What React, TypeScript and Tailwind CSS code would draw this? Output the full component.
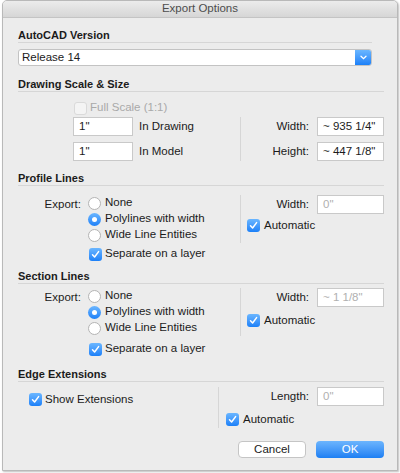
import React from "react";

const font = { fontFamily: '"Liberation Sans", Arial, sans-serif' };

const Check = ({ checked = false, disabled = false }: { checked?: boolean; disabled?: boolean }) => {
  if (checked) {
    return (
      <span className="flex h-[13px] w-[13px] shrink-0 items-center justify-center rounded-[3px] bg-gradient-to-b from-[#6ab6ff] to-[#1a80f8]">
        <svg width="9" height="9" viewBox="0 0 9 9">
          <path d="M1.5 4.8 L3.6 7 L7.6 1.6" fill="none" stroke="white" strokeWidth="1.5" strokeLinecap="round" strokeLinejoin="round" />
        </svg>
      </span>
    );
  }
  return (
    <span
      className={
        disabled
          ? "h-[13px] w-[13px] shrink-0 rounded-[3px] border border-[#dadada] bg-[#f4f4f4]"
          : "h-[13px] w-[13px] shrink-0 rounded-[3px] border border-[#b4b4b4] bg-white"
      }
    />
  );
};

const Radio = ({ checked = false }: { checked?: boolean }) =>
  checked ? (
    <span className="flex h-[13px] w-[13px] shrink-0 items-center justify-center rounded-full bg-gradient-to-b from-[#6ab6ff] to-[#1a80f8]">
      <span className="h-[5px] w-[5px] rounded-full bg-white" />
    </span>
  ) : (
    <span className="h-[13px] w-[13px] shrink-0 rounded-full border border-[#b4b4b4] bg-white" />
  );

const Heading = ({ children, mt }: { children: React.ReactNode; mt: string }) => (
  <>
    <div className={`${mt} h-[14px] text-[11px] font-bold leading-[14px] text-[#1b1b1b]`}>{children}</div>
    <div className="h-px bg-[#d6d6d6]" />
  </>
);

const Field = ({ value, muted = false, w = "w-[67px]" }: { value: string; muted?: boolean; w?: string }) => (
  <div
    className={`${w} h-[19px] border border-[#c9c9c9] bg-white pl-[5px] text-[11.5px] leading-[17px] ${
      muted ? "text-[#b0b0b0]" : "text-[#1b1b1b]"
    }`}
  >
    {value}
  </div>
);

const LineBlock = ({ width, automaticTop }: { width: string; automaticTop: string }) => (
  <div className="flex">
    <div className="flex w-[222px]">
      <div className="w-[63px] pt-[1px] text-right leading-[16px]">Export:</div>
      <div className="ml-[7px] flex flex-col">
        <div className="flex h-[16px] items-center gap-[4px]">
          <Radio />
          <span>None</span>
        </div>
        <div className="flex h-[16px] items-center gap-[4px]">
          <Radio checked />
          <span>Polylines with width</span>
        </div>
        <div className="flex h-[16px] items-center gap-[4px]">
          <Radio />
          <span>Wide Line Entities</span>
        </div>
      </div>
    </div>
    <div className="w-px bg-[#d6d6d6]" />
    <div className="flex flex-1 flex-col">
      <div className="flex items-center justify-end gap-[8px]">
        <span>Width:</span>
        <Field value={width} muted />
      </div>
      <div className={`${automaticTop} ml-[6px] flex items-center gap-[4px]`}>
        <Check checked />
        <span>Automatic</span>
      </div>
    </div>
  </div>
);

export default function App() {
  return (
    <div className="h-[473px] w-[400px] bg-white text-[11.5px] text-[#1b1b1b]" style={font}>
      <div className="ml-[2px] flex h-[471px] w-[396px] flex-col overflow-hidden rounded-t-[5px] border border-[#b9b9b9] bg-[#ececec] shadow-[1px_1px_2px_rgba(0,0,0,0.25)]">
        <div className="flex h-[17px] shrink-0 items-center justify-center border-b border-[#c4c4c4] bg-gradient-to-b from-[#ececec] to-[#d6d6d6] text-[11.5px] text-[#4d4d4d]">
          Export Options
        </div>
        <div className="flex flex-col pl-[15px] pr-[13px]">
          <div className="w-[354px]">
            <Heading mt="mt-[10px]">AutoCAD Version</Heading>
          </div>
          <div className="mt-[6px] flex h-[17px] w-[354px] overflow-hidden rounded-[3px] border border-[#c3c3c3] bg-white">
            <div className="flex-1 pl-[3px] leading-[15px]">Release 14</div>
            <div className="flex w-[16px] items-center justify-center bg-gradient-to-b from-[#6ab6ff] to-[#1a80f8]">
              <svg width="7" height="5" viewBox="0 0 7 5">
                <path d="M1 1.2 L3.5 3.6 L6 1.2" fill="none" stroke="white" strokeWidth="1.3" strokeLinecap="round" />
              </svg>
            </div>
          </div>

          <Heading mt="mt-[11px]">Drawing Scale &amp; Size</Heading>
          <div className="mt-[9px] ml-[56px] flex h-[14px] items-center gap-[3px] text-[#a9a9a9]">
            <Check disabled />
            <span>Full Scale (1:1)</span>
          </div>
          <div className="mt-[2px] flex">
            <div className="flex w-[222px] flex-col gap-[6px] pl-[55px]">
              <div className="flex items-center gap-[6px]">
                <Field value={'1"'} w="w-[60px]" />
                <span>In Drawing</span>
              </div>
              <div className="flex items-center gap-[6px]">
                <Field value={'1"'} w="w-[60px]" />
                <span>In Model</span>
              </div>
            </div>
            <div className="w-px bg-[#d6d6d6]" />
            <div className="flex flex-1 flex-col gap-[6px]">
              <div className="flex items-center justify-end gap-[8px]">
                <span>Width:</span>
                <Field value={'~ 935 1/4"'} />
              </div>
              <div className="flex items-center justify-end gap-[8px]">
                <span>Height:</span>
                <Field value={'~ 447 1/8"'} />
              </div>
            </div>
          </div>

          <Heading mt="mt-[10px]">Profile Lines</Heading>
          <div className="mt-[9px]">
            <LineBlock width={'0"'} automaticTop="mt-[3px]" />
          </div>
          <div className="mt-[3px] ml-[71px] flex h-[16px] items-center gap-[3px]">
            <Check checked />
            <span>Separate on a layer</span>
          </div>

          <Heading mt="mt-[7px]">Section Lines</Heading>
          <div className="mt-[4px]">
            <LineBlock width={'~ 1 1/8"'} automaticTop="mt-[5px]" />
          </div>
          <div className="mt-[5px] ml-[71px] flex h-[16px] items-center gap-[3px]">
            <Check checked />
            <span>Separate on a layer</span>
          </div>

          <Heading mt="mt-[10px]">Edge Extensions</Heading>
          <div className="mt-[5px] flex">
            <div className="w-[200px] pl-[11px] pt-[4px]">
              <div className="flex items-center gap-[3px]">
                <Check checked />
                <span>Show Extensions</span>
              </div>
            </div>
            <div className="w-px bg-[#d6d6d6]" />
            <div className="flex flex-1 flex-col">
              <div className="flex items-center justify-end gap-[8px]">
                <span>Length:</span>
                <Field value={'0"'} muted />
              </div>
              <div className="mt-[5px] ml-[7px] flex items-center gap-[4px]">
                <Check checked />
                <span>Automatic</span>
              </div>
            </div>
          </div>

          <div className="mt-[13px] flex justify-end gap-[10px]">
            <button className="h-[17px] w-[68px] rounded-[4px] border border-[#c5c5c5] bg-white text-[11.5px] leading-[15px] text-[#1b1b1b]">
              Cancel
            </button>
            <button className="h-[17px] w-[68px] rounded-[4px] bg-gradient-to-b from-[#6cb5fd] to-[#1b7ff3] text-[11.5px] leading-[17px] text-white">
              OK
            </button>
          </div>
        </div>
      </div>
    </div>
  );
}
